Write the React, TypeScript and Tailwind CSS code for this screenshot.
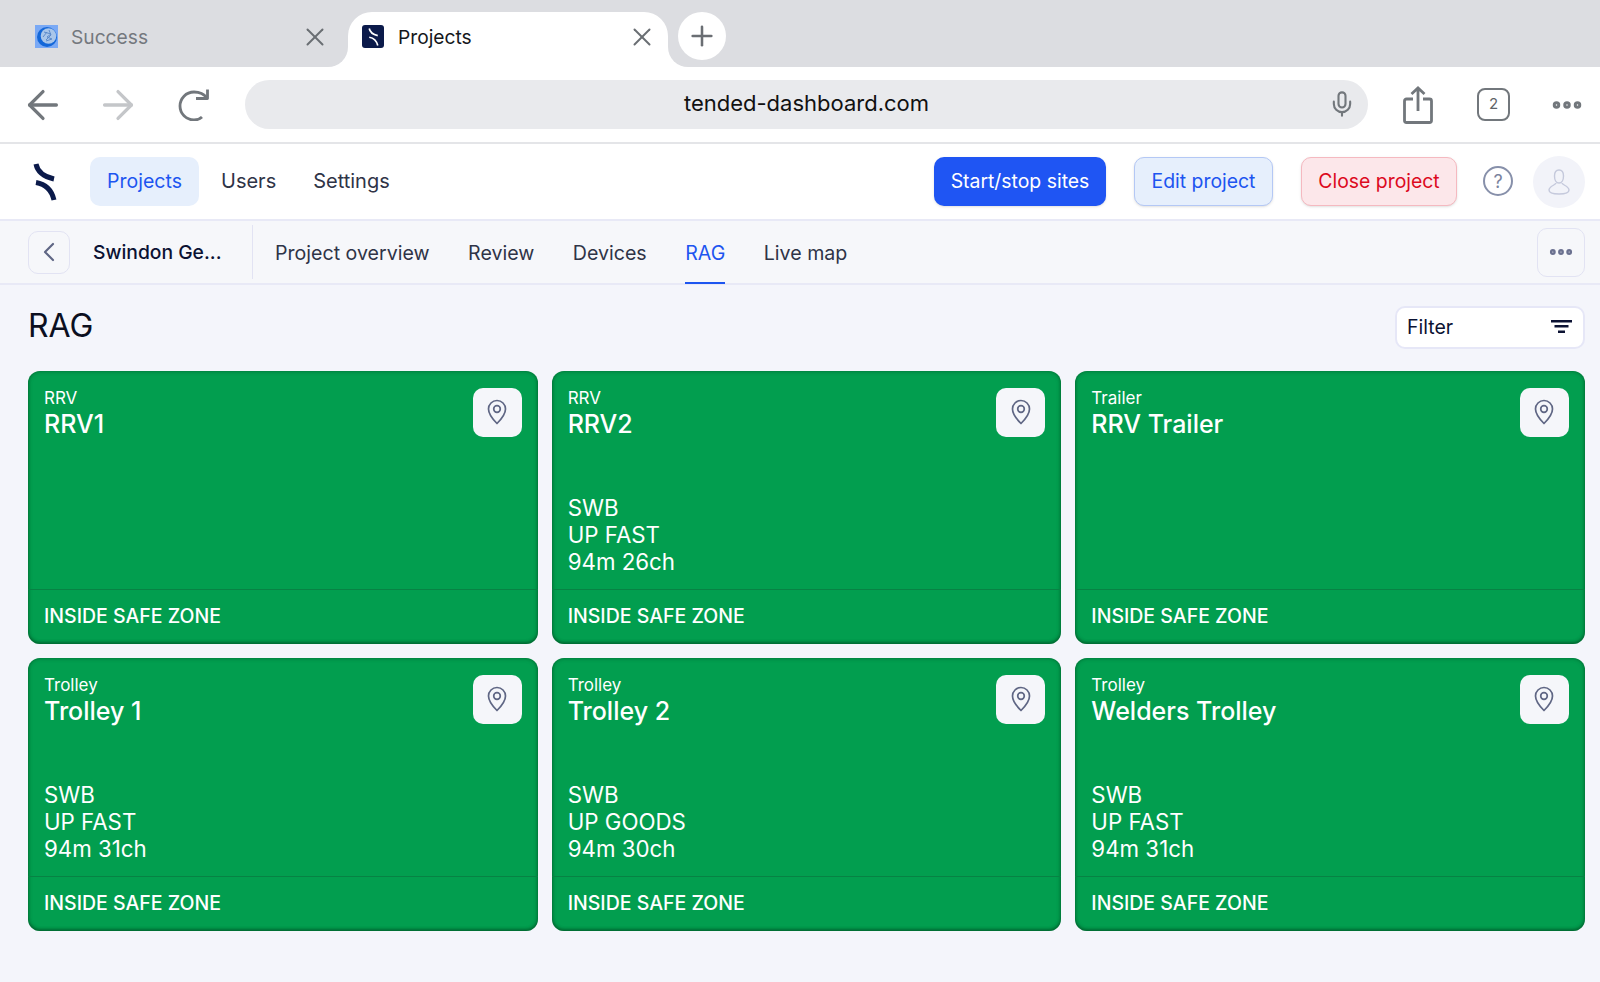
import { ArrowLeft, ArrowRight, ChevronLeft, Mic, MoreHorizontal, Plus, X } from 'lucide-react';

type Site = {
  kind: string;
  name: string;
  lines?: string[];
};

const sites: Site[] = [
  { kind: 'RRV', name: 'RRV1' },
  { kind: 'RRV', name: 'RRV2', lines: ['SWB', 'UP FAST', '94m 26ch'] },
  { kind: 'Trailer', name: 'RRV Trailer' },
  { kind: 'Trolley', name: 'Trolley 1', lines: ['SWB', 'UP FAST', '94m 31ch'] },
  { kind: 'Trolley', name: 'Trolley 2', lines: ['SWB', 'UP GOODS', '94m 30ch'] },
  { kind: 'Trolley', name: 'Welders Trolley', lines: ['SWB', 'UP FAST', '94m 31ch'] },
];

const TendedMark = ({ className, color, weight }: { className: string; color: string; weight: number }) => (
  <svg viewBox="0 0 24 38" fill="none" className={className}>
    <path d="M3 1C4.500 9 10 13.500 21 16" stroke={color} strokeWidth={weight} />
    <path d="M3 19.500C12 21 18.500 26.500 21 37" stroke={color} strokeWidth={weight} />
  </svg>
);

const PinIcon = () => (
  <svg viewBox="0 0 24 28" fill="none" className="w-[24px] h-[28px] -mt-px" stroke="#5f6684" strokeWidth="1.700">
    <path d="M12 25.500C7.500 21 3.500 16.500 3.500 11a8.500 8.500 0 0 1 17 0c0 5.500-4 10-8.500 14.500Z" strokeLinejoin="round" />
    <circle cx="12" cy="11" r="3.300" />
  </svg>
);

const SiteCard = ({ site }: { site: Site }) => (
  <div className="h-[273px] rounded-xl bg-[#029e4f] shadow-[inset_0_0_4px_rgba(0,70,30,0.55),inset_0_-2px_3px_rgba(0,70,30,0.45)] flex flex-col text-white">
    <div className="flex-1 flex flex-col justify-between pl-4 pr-4 pt-[17px] pb-[14px]">
      <div className="flex justify-between items-start">
        <div>
          <div className="text-[17px] leading-[20px]">{site.kind}</div>
          <div className="text-[25px] leading-[33px] font-medium">{site.name}</div>
        </div>
        <div className="w-[49px] h-[49px] rounded-[10px] bg-[#f5f6fa] flex items-center justify-center">
          <PinIcon />
        </div>
      </div>
      {site.lines && (
        <div className="text-[22.300px] leading-[27px]">
          {site.lines.map((line) => (
            <div key={line}>{line}</div>
          ))}
        </div>
      )}
    </div>
    <div className="h-[55px] border-t border-[#078244] px-4 flex items-center text-[19.500px] font-medium">
      INSIDE SAFE ZONE
    </div>
  </div>
);

export default function App() {
  return (
    <div className="w-[1600px] h-[982px] overflow-hidden bg-[#f4f5fb] font-['Inter',sans-serif]">
      {/* browser tabs */}
      <div className="h-[67px] bg-[#dcdde1] flex items-end">
        <div className="w-[348px] h-[55px] pb-[4px] flex items-center pl-[35px] pr-[18px] text-[19.200px] text-[#74787e]">
          <span className="w-[23px] h-[23px] -mt-[2px] bg-[#7aa9f5] flex items-center justify-center mr-[13px]">
            <svg viewBox="0 0 22 22" className="w-[22px] h-[22px]">
              <circle cx="11" cy="11" r="10" fill="#1467d8" />
              <circle cx="12.500" cy="10" r="7.800" fill="#a9c6ea" />
              <path d="M8 6l7 2-4 3 5 2-6 2M7 11l4-5M13 4l2 5-5 5" stroke="#5d8bcb" strokeWidth="1" fill="none" />
            </svg>
          </span>
          <span className="flex-1">Success</span>
          <X className="w-[30px] h-[30px] -mt-[2px] text-[#6a6e73]" strokeWidth={1.600} />
        </div>
        <div className="relative w-[320px] h-[55px] pb-[4px] bg-white rounded-t-[24px] flex items-center pl-[14px] pr-[11px] text-[19.200px] text-[#15171c]">
          <span className="absolute bottom-0 -left-5 w-5 h-5 bg-white">
            <span className="block w-full h-full bg-[#dcdde1] rounded-br-[20px]" />
          </span>
          <span className="absolute bottom-0 -right-5 w-5 h-5 bg-white">
            <span className="block w-full h-full bg-[#dcdde1] rounded-bl-[20px]" />
          </span>
          <span className="w-[22px] h-[23px] -mt-[2px] rounded-[3px] bg-[#0b1a4a] flex items-center justify-center mr-[14px]">
            <TendedMark className="w-[13px] h-[18px]" color="#ffffff" weight={3.500} />
          </span>
          <span className="flex-1">Projects</span>
          <X className="w-[30px] h-[30px] -mt-[2px] text-[#6a6e73]" strokeWidth={1.600} />
        </div>
        <div className="relative ml-[10px] mb-[7px] w-[48px] h-[48px] rounded-full bg-white flex items-center justify-center">
          <Plus className="w-[32px] h-[32px] text-[#6a6e73]" strokeWidth={1.900} />
        </div>
      </div>

      {/* browser toolbar */}
      <div className="h-[77px] bg-white border-b-2 border-[#e4e5e8] flex items-center pl-[20px] pr-[10px]">
        <ArrowLeft className="w-[46px] h-[46px] text-[#72777c]" strokeWidth={1.700} />
        <ArrowRight className="ml-[29px] w-[46px] h-[46px] text-[#c4c6c9]" strokeWidth={1.700} />
        <svg viewBox="0 0 32 32" fill="none" className="ml-[37px] w-[32px] h-[32px]" stroke="#72777c" strokeWidth="2.800">
          <path d="M29 9C26 5 21 3 16 3 8 3 2 9.500 2 17s6 14 14 14c3.500 0 6-1 8-3" />
          <path d="M18 9.500h11.500v-9" strokeLinejoin="round" />
        </svg>
        <div className="ml-[35px] w-[1123px] h-[49px] mb-px rounded-full bg-[#e9eaed] relative flex items-center justify-center text-[22px] text-[#111]">
          <span className="-mt-px">tended-dashboard.com</span>
          <Mic className="absolute right-[12px] w-[28px] h-[28px] text-[#72777c]" strokeWidth={1.800} />
        </div>
        <svg viewBox="0 0 30 38" fill="none" className="ml-[35px] w-[30px] h-[38px]" stroke="#72777c" strokeWidth="2.800">
          <path d="M10 13H3.500A2 2 0 0 0 1.500 15v19.500a2 2 0 0 0 2 2h23a2 2 0 0 0 2-2V15a2 2 0 0 0-2-2H20" />
          <path d="M15 25V2M8.500 8 15 2l6.500 6" />
        </svg>
        <div className="ml-[44px] w-[33px] h-[33px] rounded-[8px] border-[2.500px] border-[#72777c] flex items-center justify-center text-[15px] text-[#5f6368]">
          2
        </div>
        <MoreHorizontal className="ml-[39px] w-[36px] h-[36px] text-[#72777c]" strokeWidth={3} />
      </div>

      {/* app nav */}
      <div className="h-[77px] bg-white border-b-2 border-[#e8e9f6] flex items-center pl-[33px] pr-[15px]">
        <TendedMark className="w-[24px] h-[38px]" color="#0b1a4a" weight={5} />
        <div className="ml-[33px] h-[49px] w-[109px] rounded-[10px] bg-[#e6effc] text-[#1d55f0] text-[19.500px] flex items-center justify-center">
          Projects
        </div>
        <span className="ml-[22px] mb-px text-[20px] text-[#2f3447]">Users</span>
        <span className="ml-[37px] mb-px text-[20px] text-[#2f3447]">Settings</span>
        <div className="flex-1" />
        <div className="w-[172px] h-[49px] rounded-[10px] bg-[#1f55f3] text-white text-[19.400px] flex items-center justify-center shadow-sm">
          Start/stop sites
        </div>
        <div className="ml-[28px] w-[139px] h-[49px] rounded-[10px] bg-[#e6effc] border border-[#b4c8f5] text-[#1d55f0] text-[19.400px] flex items-center justify-center shadow-sm">
          Edit project
        </div>
        <div className="ml-[28px] w-[156px] h-[49px] rounded-[10px] bg-[#fce7ea] border border-[#f5b9c0] text-[#dc0a1e] text-[19.400px] flex items-center justify-center shadow-sm">
          Close project
        </div>
        <div className="ml-[26px] w-[30px] h-[30px] -mt-px rounded-full border-2 border-[#8790aa] flex items-center justify-center text-[18px] text-[#7a839e]">
          ?
        </div>
        <div className="ml-[20px] w-[52px] h-[52px] rounded-full bg-[#f2f3f9] flex items-center justify-center">
          <svg viewBox="0 0 24 28" fill="none" className="w-[24px] h-[28px]" stroke="#c5c9dc" strokeWidth="1.400">
            <path d="M12 2c3 0 4.500 2.500 4.500 6s-1.500 7-4.500 7-4.500-3.500-4.500-7 1.500-6 4.500-6Z" />
            <path d="M9 15c0 2-7 3-7 7 0 3 3 4 10 4s10-1 10-4c0-4-7-5-7-7" />
          </svg>
        </div>
      </div>

      {/* project sub nav */}
      <div className="h-[64px] bg-[#f6f7fa] border-b-2 border-[#e8e9f6] flex items-center pl-[28px] pr-[15px]">
        <div className="w-[42px] h-[43px] rounded-[10px] border border-[#e2e3f3] flex items-center justify-center">
          <ChevronLeft className="w-[32px] h-[32px] text-[#5f6684]" strokeWidth={1.600} />
        </div>
        <span className="ml-[23px] w-[159px] shrink-0 text-[19.300px] font-medium text-[#0b1233]">Swindon Ge...</span>
        <div className="w-px h-[54px] bg-[#e2e3f3]" />
        <span className="ml-[22px] mt-[4px] text-[19.600px] text-[#2f3447]">Project overview</span>
        <span className="ml-[38.500px] mt-[4px] text-[19.600px] text-[#2f3447]">Review</span>
        <span className="ml-[38.500px] mt-[4px] text-[19.600px] text-[#2f3447]">Devices</span>
        <span className="relative ml-[38.500px] mt-[4px] text-[19.600px] text-[#1d55f0]">
          RAG
          <span className="absolute left-0 right-0 -bottom-[15px] h-[2px] bg-[#1d55f0]" />
        </span>
        <span className="ml-[38.500px] mt-[4px] text-[19.600px] text-[#2f3447]">Live map</span>
        <div className="flex-1" />
        <div className="w-[48px] h-[49px] rounded-[10px] border border-[#e2e3f3] flex items-center justify-center">
          <MoreHorizontal className="w-[28px] h-[28px] text-[#6b7190]" strokeWidth={3} />
        </div>
      </div>

      {/* page */}
      <div className="pl-[28px] pr-[15px]">
        <div className="h-[86px] flex items-start justify-between pt-[20px]">
          <h1 className="text-[32px] leading-[42px] text-[#0b0f1f]">RAG</h1>
          <div className="mt-px w-[190px] h-[43px] rounded-[10px] bg-white border-2 border-[#e6e7f7] flex items-center justify-between pl-[10px] pr-[10px] text-[19.500px] text-[#0b1233]">
            <span className="mt-px">Filter</span>
            <svg viewBox="0 0 22 14" className="w-[22px] h-[14px] -mt-[2px]" fill="#0b1233">
              <rect x="0" y="0" width="21" height="2.500" />
              <rect x="3.500" y="5" width="14" height="2.500" />
              <rect x="7" y="10.500" width="7" height="2.500" />
            </svg>
          </div>
        </div>
        <div className="grid grid-cols-3 gap-x-[14px] gap-y-[14px]">
          {sites.map((site) => (
            <SiteCard key={site.name} site={site} />
          ))}
        </div>
      </div>
    </div>
  );
}
